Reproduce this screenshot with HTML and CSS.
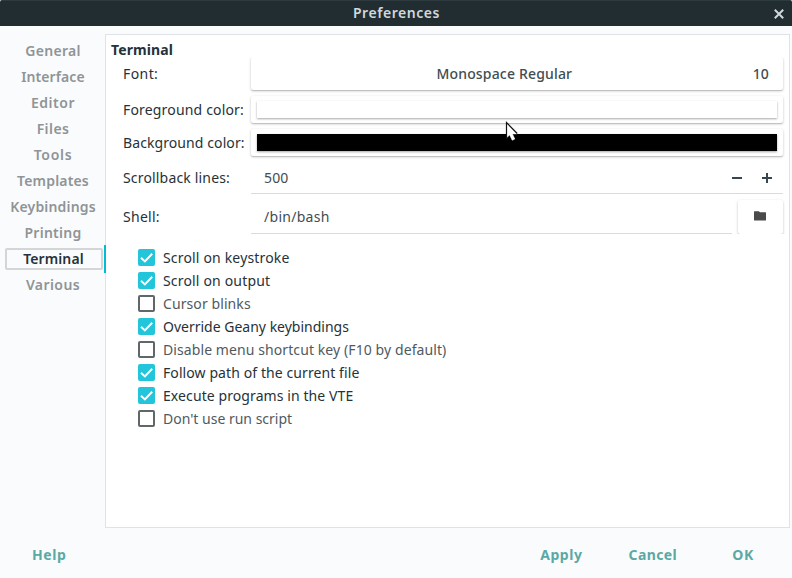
FILE: index.html
```html
<!DOCTYPE html>
<html lang="en">
<head>
<meta charset="utf-8">
<title>Preferences</title>
<link rel="stylesheet" href="styles.css">
</head>
<body>
<div class="window">
  <header class="titlebar">
    <span></span>
    <h1 class="ls5">Preferences</h1>
    <button class="close" aria-label="Close"><svg width="10" height="10" viewBox="0 0 10 10"><path d="M.8.8l8.4 8.4M9.2.8L.8 9.2"/></svg></button>
  </header>
  <main class="body">
    <nav class="tabs">
      <a class="ls3">General</a>
      <a class="ls1">Interface</a>
      <a class="ls5">Editor</a>
      <a class="ls4">Files</a>
      <a class="ls6">Tools</a>
      <a class="ls2">Templates</a>
      <a class="ls2">Keybindings</a>
      <a class="ls3">Printing</a>
      <a class="ls1 active">Terminal</a>
      <a class="ls4">Various</a>
    </nav>
    <section class="page">
      <h2 class="ls1">Terminal</h2>
      <div class="form">
        <label class="ls4">Font:</label>
        <button class="raised font"><span class="family ls2">Monospace Regular</span><span class="ls2">10</span></button>
        <label class="ls2">Foreground color:</label>
        <button class="raised color"><span class="swatch white"></span></button>
        <label class="ls1">Background color:</label>
        <button class="raised color"><span class="swatch black"></span></button>
        <label class="ls2">Scrollback lines:</label>
        <div class="entry spin">
          <span class="value ls2">500</span>
          <svg width="10" height="10" viewBox="0 0 10 10"><path d="M0 5h10"/></svg>
          <svg width="10" height="10" viewBox="0 0 10 10"><path d="M0 5h10M5 0v10"/></svg>
        </div>
        <label class="ls3">Shell:</label>
        <div class="shell">
          <div class="entry"><span class="value ls3">/bin/bash</span></div>
          <button class="raised browse" aria-label="Browse"><svg width="12" height="10" viewBox="0 0 12 10"><path d="M.5.2h4.300L6 1.300h5.500q.5 0 .5.500V9q0 .6-.6.6H.6Q0 9.600 0 9V.7Q0 .2.5.2z"/></svg></button>
        </div>
      </div>
      <ul class="checks">
        <li class="on ls2"><i><svg viewBox="0 0 17 17"><path d="M3 8.700l3.900 3.700 7.300-7.600"/></svg></i>Scroll on keystroke</li>
        <li class="on ls2"><i><svg viewBox="0 0 17 17"><path d="M3 8.700l3.900 3.700 7.300-7.600"/></svg></i>Scroll on output</li>
        <li class="ls1"><i></i>Cursor blinks</li>
        <li class="on ls0"><i><svg viewBox="0 0 17 17"><path d="M3 8.700l3.900 3.700 7.300-7.600"/></svg></i>Override Geany keybindings</li>
        <li class="ls1"><i></i>Disable menu shortcut key (F10 by default)</li>
        <li class="on ls1"><i><svg viewBox="0 0 17 17"><path d="M3 8.700l3.900 3.700 7.300-7.600"/></svg></i>Follow path of the current file</li>
        <li class="on ls1"><i><svg viewBox="0 0 17 17"><path d="M3 8.700l3.900 3.700 7.300-7.600"/></svg></i>Execute programs in the VTE</li>
        <li class="ls0"><i></i>Don't use run script</li>
      </ul>
    </section>
  </main>
  <footer class="actions">
    <button class="help ls5">Help</button>
    <button class="ls5">Apply</button>
    <button class="ls4">Cancel</button>
    <button class="ls6">OK</button>
  </footer>
  <svg class="pointer" width="14" height="22" viewBox="0 0 14 22"><path class="arrow" d="M1.500 1.500v15.300l3.200-2.900 2.500 5.300 2.600-1.200-2.500-5.200h4.600z"/><path class="edge" d="M1.500 17V1.500l10.700 11"/></svg>
</div>
</body>
</html>
```
FILE: styles.css
```css
* { box-sizing: border-box; }
body {
  margin: 0;
  background: #222d32;
  font: 14px/20px "Noto Sans", sans-serif;
  color: #263238;
}
h1, h2, ul { margin: 0; padding: 0; font-size: inherit; list-style: none; }
button { margin: 0; padding: 0; border: 0; background: none; font: inherit; color: inherit; }
svg { display: block; fill: none; }

/* Tracking steps for the label text */
.ls0 { letter-spacing: 0; }
.ls1 { letter-spacing: .09px; }
.ls2 { letter-spacing: .17px; }
.ls3 { letter-spacing: .28px; }
.ls4 { letter-spacing: .42px; }
.ls5 { letter-spacing: .55px; }
.ls6 { letter-spacing: .7px; }

.window {
  position: relative;
  display: flex;
  flex-direction: column;
  width: 792px;
  height: 578px;
  background: #fafbfd;
}

.titlebar {
  display: grid;
  grid-template-columns: 1fr auto 1fr;
  align-items: center;
  height: 26px;
  padding-right: 8px;
  background: #222d32;
  border-top: 1px solid #2d3a40;
  border-radius: 2px 2px 0 0;
  color: #cfd8dc;
}
.titlebar h1 { padding: 0 0 2px 9px; font-weight: 600; }
.close { justify-self: end; }
.close svg { stroke: #cfd8dc; stroke-width: 2; }

.body { display: flex; height: 502px; padding: 8px 2px 0 0; }

.tabs { display: flex; flex-direction: column; width: 105px; padding-top: 4px; }
.tabs a {
  height: 26px;
  line-height: 26px;
  padding-left: 1px;
  text-align: center;
  font-weight: 600;
  color: #8f9496;
}
.tabs .active {
  position: relative;
  height: 22px;
  margin: 2px 2px 2px 5px;
  padding: 0 1px 0 0;
  line-height: 18px;
  border: 2px solid #d3d5d6;
  border-radius: 2px;
  color: #263238;
}
.tabs .active::after {
  content: "";
  position: absolute;
  top: -5px;
  right: -5px;
  width: 2px;
  height: 28px;
  background: #00bcd4;
}

.page { flex: 1; height: 494px; padding: 0 6px 0 5px; background: #fff; border: 1px solid #dfe3e7; }
.page h2 { height: 22px; line-height: 30px; font-weight: 700; }

.form {
  display: grid;
  grid-template-columns: 128px 532px;
  grid-template-rows: 33px 27px 27px 32px 34px;
  row-gap: 6px;
  padding-left: 12px;
  align-items: center;
}
.form > :not(label) { height: 100%; }
.raised { background: #fff; border-radius: 2px; box-shadow: 0 1px 3px rgba(0, 0, 0, .2), 0 1px 1px rgba(0, 0, 0, .14); }
.font {
  display: flex;
  align-items: center;
  padding: 0 14px 0 5px;
  font-weight: 500;
  color: #414d52;
  clip-path: inset(0 -4px -4px -4px);
}
.family { flex: 1; text-align: center; }
.color { padding: 5px 6px; }
.swatch { display: block; height: 17px; box-shadow: 0 1px 2px rgba(0, 0, 0, .35); }
.white { background: #fff; }
.black { background: #000; }
.entry { display: flex; align-items: center; height: 100%; border-bottom: 1px solid #d9dcdd; padding-left: 13px; color: #414d52; }
.value { flex: 1; padding-top: 1px; }
.spin { gap: 20px; padding-right: 11px; }
.spin svg { stroke: #37474f; stroke-width: 2; }
.shell { display: flex; gap: 6px; }
.shell .entry { flex: 1; }
.browse { display: grid; place-items: center; width: 45px; clip-path: inset(-4px -4px 0 -4px); }
.browse svg { fill: #4a4a4a; margin: 0 1px 2px 0; }

.checks { padding: 12px 0 0 27px; }
.checks li { display: flex; align-items: center; gap: 8px; height: 23px; color: #4f5a5f; }
.checks i { width: 17px; height: 17px; border: 2px solid #5f676b; border-radius: 2px; }
.checks .on { color: #263238; }
.checks .on i { border: 0; background: #22c5da; }
.checks svg { stroke: #fff; stroke-width: 2; }

.actions {
  display: flex;
  align-items: center;
  height: 50px;
  padding: 4px 38px 0 32px;
  gap: 46px;
  font-weight: 700;
  color: #5ba9a5;
}
.help { margin-right: auto; }
.actions button:last-child { margin-left: 9px; }

.pointer { position: absolute; left: 505px; top: 121px; }
.arrow { fill: #fff; stroke: #fff; stroke-width: .6; }
.edge { stroke: #111; stroke-width: 1.200; }
```
